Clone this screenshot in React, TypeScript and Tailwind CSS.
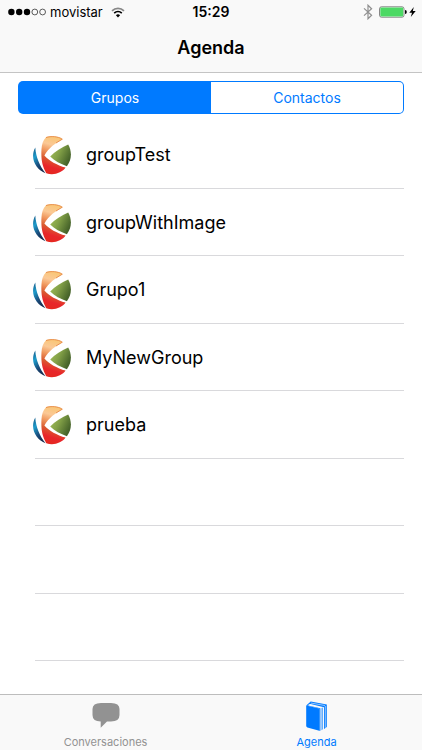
import { useState } from "react";

const groups = ["groupTest", "groupWithImage", "Grupo1", "MyNewGroup", "prueba", "", "", ""];

function GroupLogo({ id }: { id: string }) {
  return (
    <svg viewBox="0 0 40 40" className="size-10 shrink-0" aria-hidden="true">
      <defs>
        <linearGradient id={`${id}-warm`} x1="0.6" y1="0" x2="0.4" y2="1">
          <stop offset="0" stopColor="#f9c672" />
          <stop offset="0.25" stopColor="#fbc996" />
          <stop offset="0.42" stopColor="#f0995f" />
          <stop offset="0.62" stopColor="#d95a30" />
          <stop offset="0.82" stopColor="#e8262a" />
          <stop offset="1" stopColor="#e5281f" />
        </linearGradient>
        <linearGradient id={`${id}-green`} x1="0" y1="0" x2="1" y2="0.5">
          <stop offset="0" stopColor="#a9c45c" />
          <stop offset="0.5" stopColor="#82a047" />
          <stop offset="1" stopColor="#47642a" />
        </linearGradient>
        <linearGradient id={`${id}-blue`} x1="0" y1="0" x2="0.5" y2="1">
          <stop offset="0" stopColor="#17517f" />
          <stop offset="0.35" stopColor="#1d9ccb" />
          <stop offset="0.7" stopColor="#1b4f7e" />
          <stop offset="1" stopColor="#152c50" />
        </linearGradient>
      </defs>
      <path
        d="M14 2.3C18 .6 26.5 1 30.5 4.2C24 7.8 16.5 12.8 12.4 20.4C17 25.8 25 30 33.6 32.6C30 38 21 41 14.3 38.2C10.5 32 8.8 25 9.5 14C9.8 9.5 11 5.5 14 2.3Z"
        fill={`url(#${id}-warm)`}
      />
      <path d="M14 2.5C19 1 26 1.2 30.3 4.2L24 8" fill="none" stroke="#e5803c" strokeWidth=".8" />
      <path d="M18.2 21.4C23.5 16 29 12.5 36.2 9.4C39.6 15.5 40.4 24 34.9 31.2C28.5 28.8 22.5 25.8 18.2 21.4Z" fill={`url(#${id}-green)`} />
      <path d="M3.3 12.4C3.8 21.5 7.5 31 13.6 38.2C4 35.2-2.6 23 3.3 12.4Z" fill={`url(#${id}-blue)`} />
    </svg>
  );
}

function StatusBar() {
  return (
    <div className="grid h-6 grid-cols-3 items-center px-2 text-[13px] leading-6 text-black">
      <div className="flex items-center gap-1">
        <svg viewBox="0 0 38 8" className="h-2 w-[38px]" aria-hidden="true">
          <circle cx="3.4" cy="4" r="3.2" />
          <circle cx="11.2" cy="4" r="3.2" />
          <circle cx="19" cy="4" r="3.2" />
          <g fill="none" stroke="#333" strokeWidth=".8">
            <circle cx="26.8" cy="4" r="2.9" />
            <circle cx="34.6" cy="4" r="2.9" />
          </g>
        </svg>
        <span>movistar</span>
        <svg viewBox="0 0 14 11" className="ml-1 h-[11px] w-3.5" fill="none" stroke="#000" strokeWidth="1.7" aria-hidden="true">
          <path d="M1 3.8C4.4.6 9.6.6 13 3.8" stroke="#888" />
          <path d="M3.2 6.1C5.4 4.1 8.6 4.1 10.8 6.1" />
          <path d="M7 10.4L4.9 8.2Q7 6.5 9.1 8.2Z" fill="#000" stroke="none" />
        </svg>
      </div>
      <time className="text-center text-sm font-semibold">15:29</time>
      <div className="-mr-0.5 flex items-center justify-end gap-1">
        <svg viewBox="0 0 10 16" className="mr-0.5 h-4 w-2.5" fill="none" stroke="#8f8f8f" strokeWidth="1.2" aria-hidden="true">
          <path d="M1 4.4L8.6 11.3L5 14.8V1.2L8.6 4.7L1 11.6" />
        </svg>
        <svg viewBox="0 0 28 12" className="h-3 w-7" aria-hidden="true">
          <rect x=".5" y=".8" width="24.5" height="10.4" rx="2" fill="#fff" stroke="#555" strokeWidth=".7" />
          <rect x="1.3" y="1.6" width="22.9" height="8.8" rx="1" fill="#4cd964" />
          <path d="M26 4Q27.8 4.2 27.8 6T26 8Z" />
        </svg>
        <svg viewBox="0 0 7 12" className="-ml-0.5 h-3 w-[7px]" aria-hidden="true">
          <path d="M4.8 1L.3 6.7H3L1.8 11L6.7 5H3.8Z" />
        </svg>
      </div>
    </div>
  );
}

export default function App() {
  const [tab, setTab] = useState("Grupos");
  return (
    <div className="flex min-h-screen flex-col bg-white font-[Inter,'Liberation_Sans',sans-serif] text-black">
      <header className="flex h-[73px] flex-col border-b border-[#c4c4c4] bg-[#f9f9f9]">
        <StatusBar />
        <h1 className="text-center text-lg leading-[48px] font-semibold">Agenda</h1>
      </header>

      <main className="flex flex-1 flex-col pt-2 pb-[33px]">
        <div className="mx-[18px] mb-[7px] flex h-[33px] rounded-[5px] bg-[#007aff] p-px">
          {["Grupos", "Contactos"].map((name) => (
            <button
              key={name}
              type="button"
              aria-pressed={tab === name}
              onClick={() => setTab(name)}
              className={`flex-1 text-sm first:rounded-l-sm last:rounded-r-sm ${tab === name ? "bg-[#007aff] text-white" : "bg-white text-[#007aff]"}`}
            >
              {name}
            </button>
          ))}
        </div>

        <ul className="mr-[18px] ml-[35px] grid flex-1 auto-rows-fr">
          {groups.map((name, i) => (
            <li key={i} className="flex min-h-14 items-center border-b border-[#d9d9dc] pt-0.5">
              {name && (
                <button type="button" className="-ml-[3px] flex flex-1 items-center gap-3.5 text-left text-lg">
                  <GroupLogo id={`logo-${i}`} />
                  <span>{name}</span>
                </button>
              )}
            </li>
          ))}
        </ul>
      </main>

      <nav className="grid h-14 grid-cols-2 border-t border-[#bdbdbd] bg-[#f9f9f9] text-[11px] leading-4">
        <button type="button" className="flex flex-col items-center justify-between pt-1.5 text-[#929292]">
          <svg viewBox="0 0 30 30" className="size-[30px]" fill="currentColor" aria-hidden="true">
            <path d="M10 2H20Q28.5 2 28.5 8V14Q28.5 20.5 20 20.5H16L9.7 26.8V20.5Q1.5 20.5 1.5 14V8Q1.5 2 10 2Z" />
          </svg>
          <span>Conversaciones</span>
        </button>
        <button type="button" aria-current="page" className="flex flex-col items-center justify-between pt-1.5 text-[#007aff]">
          <svg viewBox="0 0 30 30" className="size-[30px]" fill="currentColor" aria-hidden="true">
            <path d="M4.2 4.5L17.3 7.4V29.8L5.4 26.4Q4.2 26 4.2 24.7Z" />
            <path d="M4.2 4.5L8.7.6L24.8 3.4V26L22 28V6.2L8.7 3Q6.4 3 6.1 4.4L18.4 7.2V29.8L17.3 29.8V7.4Z" />
            <path d="M19.4 6.9L21 6.5V28.3L19.4 29.2Z" opacity=".6" />
            <path d="M23.3 5V26.8" stroke="#f9f9f9" strokeWidth=".6" />
            <path d="M8.8 2L23 4.5" stroke="#f9f9f9" strokeWidth=".6" />
          </svg>
          <span>Agenda</span>
        </button>
      </nav>
    </div>
  );
}
